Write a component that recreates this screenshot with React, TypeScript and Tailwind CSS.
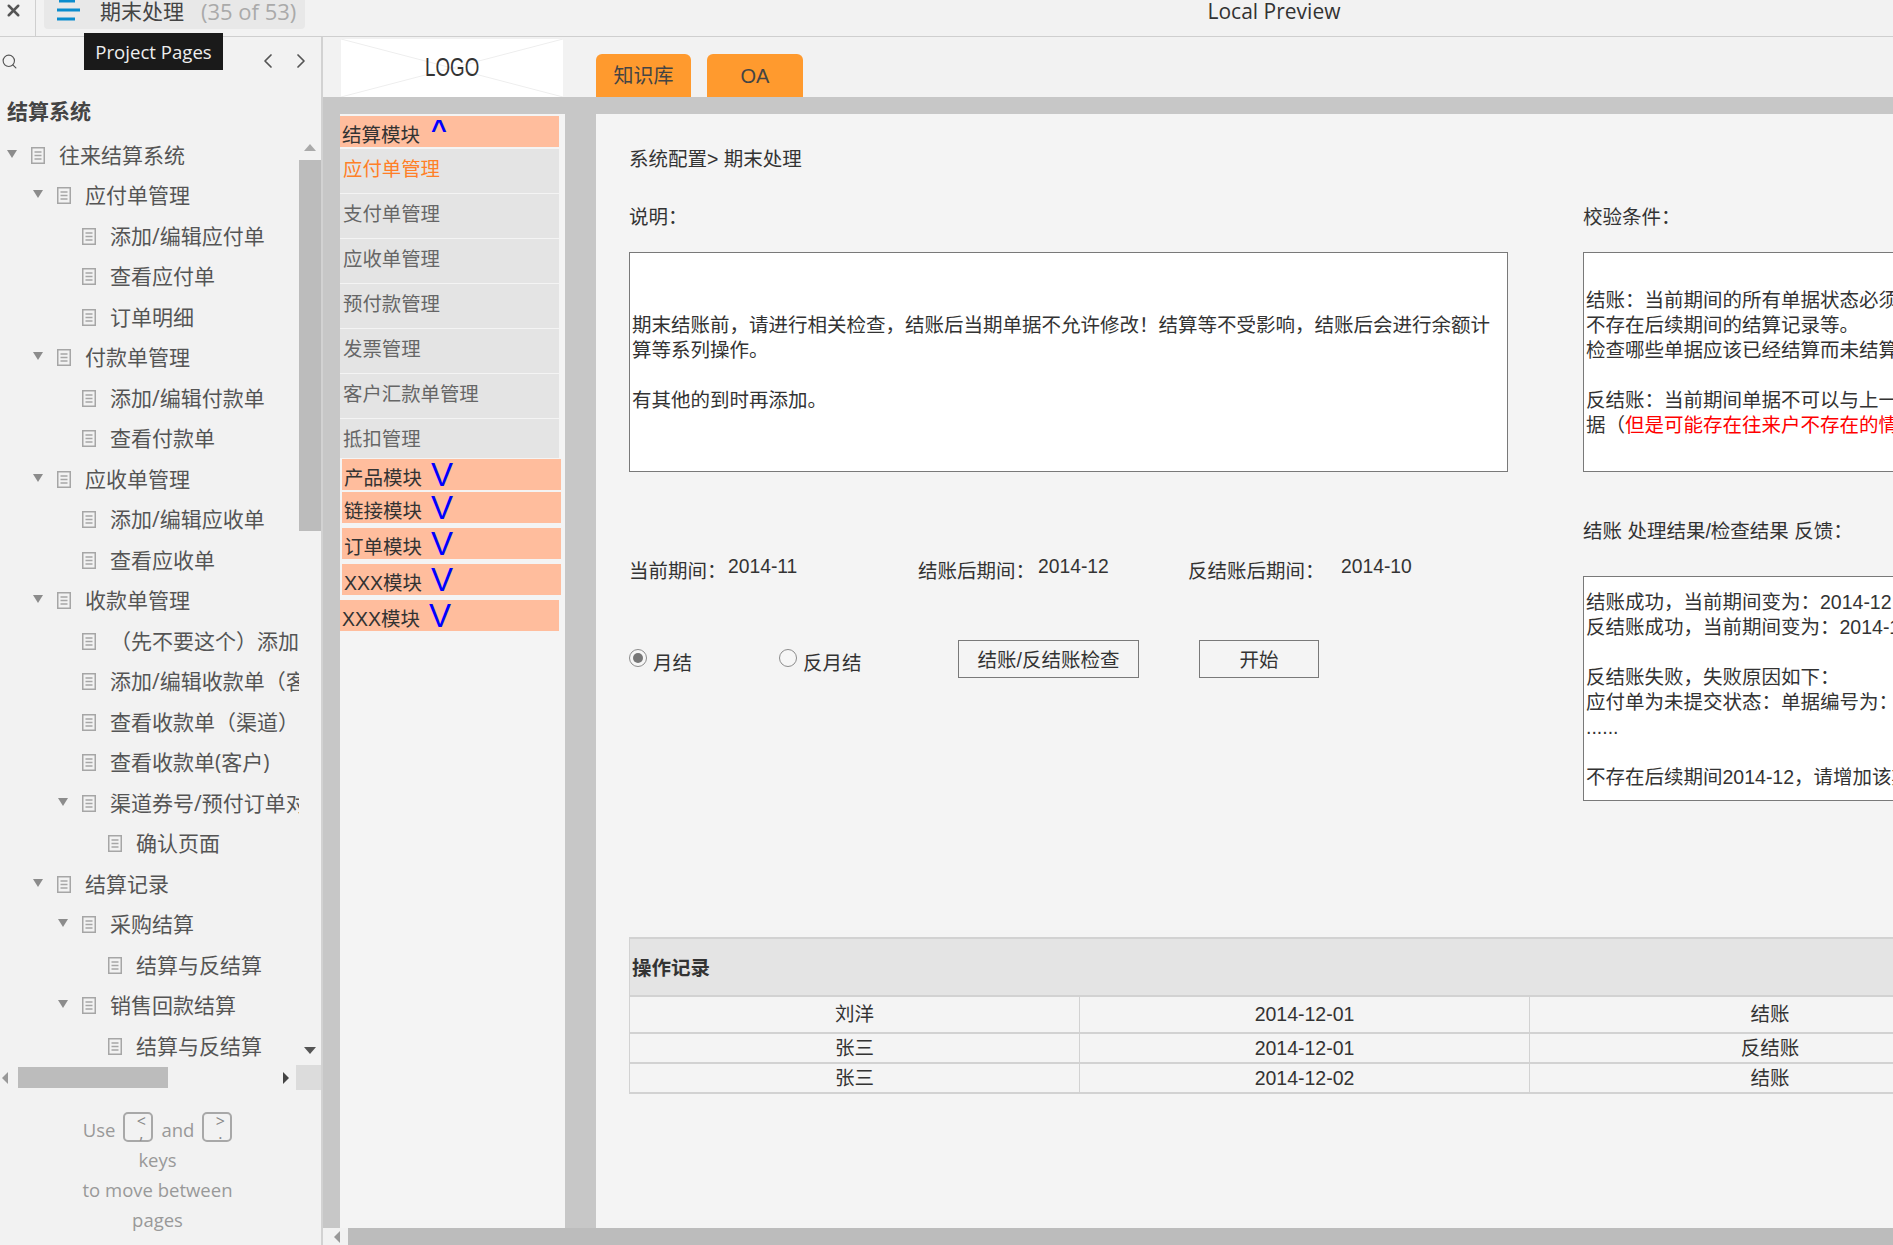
import { ChevronLeft, ChevronRight, Search, X } from 'lucide-react';

const levelPad = ['pl-[7px]', 'pl-[33px]', 'pl-[58px]', 'pl-[84px]'];

const tree = [
  { t: '往来结算系统', l: 0, o: true },
  { t: '应付单管理', l: 1, o: true },
  { t: '添加/编辑应付单', l: 2 },
  { t: '查看应付单', l: 2 },
  { t: '订单明细', l: 2 },
  { t: '付款单管理', l: 1, o: true },
  { t: '添加/编辑付款单', l: 2 },
  { t: '查看付款单', l: 2 },
  { t: '应收单管理', l: 1, o: true },
  { t: '添加/编辑应收单', l: 2 },
  { t: '查看应收单', l: 2 },
  { t: '收款单管理', l: 1, o: true },
  { t: '（先不要这个）添加/编辑收款单', l: 2 },
  { t: '添加/编辑收款单（客户）', l: 2 },
  { t: '查看收款单（渠道）', l: 2 },
  { t: '查看收款单(客户)', l: 2 },
  { t: '渠道券号/预付订单对应', l: 2, o: true },
  { t: '确认页面', l: 3 },
  { t: '结算记录', l: 1, o: true },
  { t: '采购结算', l: 2, o: true },
  { t: '结算与反结算', l: 3 },
  { t: '销售回款结算', l: 2, o: true },
  { t: '结算与反结算', l: 3 },
];

const navItems = ['支付单管理', '应收单管理', '预付款管理', '发票管理', '客户汇款单管理'];
const records = [
  ['刘洋', '2014-12-01', '结账', 'h-[37px]'],
  ['张三', '2014-12-01', '反结账', 'h-[30px]'],
  ['张三', '2014-12-02', '结账', 'h-[30px]'],
];

function PageIcon() {
  return (
    <svg width="14" height="17" viewBox="0 0 14 17" className="shrink-0">
      <rect x="0.75" y="0.75" width="12.5" height="15.5" fill="#f2f2f2" stroke="#a6a6a6" strokeWidth="1.5" />
      <path d="M3.5 5h7M3.5 8.5h7M3.5 12h7" stroke="#a6a6a6" strokeWidth="1.3" />
    </svg>
  );
}

function TreeRow({ t, l, o }: { t: string; l: number; o?: boolean }) {
  return (
    <div className={`flex h-[40.5px] items-center whitespace-nowrap ${levelPad[l]}`}>
      <span className="flex w-[24px] shrink-0 items-center">
        {o && <span className="mb-[3px] h-0 w-0 border-x-[5.5px] border-t-[8px] border-x-transparent border-t-[#8c8c8c]" />}
      </span>
      <PageIcon />
      <span className="ml-[14px] text-[21px] text-[#555]">{t}</span>
    </div>
  );
}

function KeyCap({ a, b }: { a: string; b: string }) {
  return (
    <span className="mb-[6px] flex h-[30px] w-[30px] flex-col rounded-[5px] border-2 border-[#a8a8a8] pl-[6px] text-[16px] leading-[12px] text-[#888]">
      <span className="mt-[1px]">{a}</span>
      <span>{b}</span>
    </span>
  );
}

function ModuleRow({ label, caret, shift }: { label: string; caret?: boolean; shift?: boolean }) {
  return (
    <div className={`flex h-[31px] w-[219px] bg-[#ffbd9d] pl-[2px] text-[19.5px] text-[#333] ${shift ? 'ml-[2px]' : ''}`}>
      <span className="mt-[4px] leading-[30px]">{label}</span>
      <span
        className={
          caret
            ? 'ml-[11px] mt-[-1px] text-[27px] font-bold leading-[30px] text-[#0000ff]'
            : 'ml-[9px] mt-[1px] text-[33px] leading-[30px] text-[#0000ff]'
        }
      >
        {caret ? '^' : 'V'}
      </span>
    </div>
  );
}

function NavItem({ label, active, short }: { label: string; active?: boolean; short?: boolean }) {
  return (
    <div
      className={`mb-px flex w-[219px] items-center bg-[#e4e4e4] pl-[3px] text-[19.4px] ${short ? 'h-[39px] pt-[3px]' : 'h-[44px] pb-[2px]'} ${active ? 'text-[#ff7f27]' : 'text-[#666]'}`}
    >
      {label}
    </div>
  );
}

function Radio({ on }: { on?: boolean }) {
  return (
    <span className="mt-[-2px] flex h-[18px] w-[18px] shrink-0 items-center justify-center rounded-full border border-[#8c8c8c] bg-[#f6f6f6]">
      {on && <span className="h-[10px] w-[10px] rounded-full bg-[#777]" />}
    </span>
  );
}

export default function App() {
  return (
    <div className="flex h-[1245px] w-[1893px] flex-col overflow-hidden bg-[#f2f2f2] font-['Liberation_Sans','Noto_Sans_CJK_SC',sans-serif] text-[#333]">
      <header className="relative flex h-[37px] shrink-0 border-b border-[#cfcfcf] font-['Open_Sans','Noto_Sans_CJK_SC',sans-serif]">
        <div className="flex w-[36px] shrink-0 items-start border-r border-[#cfcfcf] pl-[4px] pt-[1px]">
          <X size={19} strokeWidth={3.2} className="text-[#555]" />
        </div>
        <div className="ml-[8px] flex h-[29px] w-[261px] shrink-0 items-center rounded-b-[4px] bg-[#e8e8e8] pl-[12px]">
          <svg width="26" height="22" viewBox="0 0 26 22" className="mb-[9px]">
            <path d="M3 2h16M1 11h23M1 20h18" stroke="#0a8ccd" strokeWidth="3.2" />
          </svg>
          <span className="ml-[18px] mb-[6px] text-[21px] text-[#444]">期末处理</span>
          <span className="ml-[17px] mb-[6px] whitespace-nowrap text-[22px] text-[#aaa]">(35 of 53)</span>
        </div>
        <div className="flex-1 pl-[350px] text-center text-[21px] leading-[22px] text-[#333]">Local Preview</div>
        <div className="absolute left-[84px] top-[33px] z-10 flex h-[37px] w-[139px] items-center justify-center bg-[#1a1a1a] text-[18.6px] text-[#eee]">
          Project Pages
        </div>
      </header>

      <div className="flex min-h-0 flex-1">
        <aside className="flex w-[323px] shrink-0 flex-col border-r-2 border-r-[#d2d2d2] font-['Open_Sans','Noto_Sans_CJK_SC',sans-serif]">
          <div className="flex h-[48px] shrink-0 items-center text-[#555]">
            <Search size={17} strokeWidth={1.6} className="ml-[1px]" />
            <ChevronLeft size={24} strokeWidth={1.7} className="ml-[238px]" />
            <ChevronRight size={24} strokeWidth={1.7} className="ml-[9px]" />
          </div>
          <div className="flex h-[50px] shrink-0 items-center pl-[7px] pt-[4px] text-[21px] font-bold text-[#444]">结算系统</div>
          <div className="flex h-[930px] shrink-0">
            <div className="w-[299px] shrink-0 overflow-hidden">
              {tree.map((r, i) => (
                <TreeRow key={i} t={r.t} l={r.l} o={r.o} />
              ))}
            </div>
            <div className="flex w-[22px] shrink-0 flex-col items-center">
              <span className="mt-[9px] h-0 w-0 border-x-[6px] border-b-[7px] border-x-transparent border-b-[#aaa]" />
              <div className="mt-[9px] h-[371px] w-full bg-[#bcbcbc]" />
              <span className="mt-[516px] h-0 w-0 border-x-[6px] border-t-[7px] border-x-transparent border-t-[#555]" />
            </div>
          </div>
          <div className="flex h-[25px] shrink-0 items-center">
            <span className="ml-[2px] h-0 w-0 border-y-[6px] border-r-[6px] border-y-transparent border-r-[#999]" />
            <div className="ml-[10px] h-[21px] w-[150px] bg-[#bcbcbc]" />
            <span className="ml-[115px] h-0 w-0 border-y-[6px] border-l-[6px] border-y-transparent border-l-[#444]" />
            <div className="ml-[7px] h-full flex-1 bg-[#dcdcdc]" />
          </div>
          <div className="pr-[6px] pt-[24.5px] text-center text-[18.5px] text-[#999]">
            <div className="flex h-[30px] items-center justify-center gap-[8px] leading-[30px]">
              <span>Use</span>
              <KeyCap a="<" b="," />
              <span>and</span>
              <KeyCap a=">" b="." />
            </div>
            <div className="leading-[30px]">keys</div>
            <div className="leading-[30px]">to move between</div>
            <div className="leading-[30px]">pages</div>
          </div>
        </aside>

        <main className="flex min-w-0 flex-1 flex-col overflow-hidden">
          <div className="flex h-[60px] shrink-0">
            <div className="relative ml-[18px] mt-[2px] flex h-[58px] w-[222px] items-center justify-center bg-white">
              <svg viewBox="0 0 222 58" preserveAspectRatio="none" className="absolute inset-0 h-full w-full">
                <path d="M0 0L222 58M222 0L0 58" stroke="#eeeeee" strokeWidth="1" />
              </svg>
              <span className="relative scale-x-[0.75] text-[25px] text-[#333]">LOGO</span>
            </div>
            <button className="ml-[33px] mt-[17px] h-[43px] w-[95px] rounded-t-[6px] bg-[#ff9a2e] text-[20px] text-[#444]">知识库</button>
            <button className="ml-[16px] mt-[17px] h-[43px] w-[96px] rounded-t-[6px] bg-[#ff9a2e] text-[20px] text-[#444]">OA</button>
          </div>
          <div className="h-[17px] shrink-0 bg-[#c7c7c7]" />
          <div className="flex min-h-0 flex-1">
            <div className="w-[17px] shrink-0 bg-[#c7c7c7]" />
            <nav className="w-[225px] shrink-0 bg-[#f4f4f4] pt-[2px]">
              <div className="mb-[2px]">
                <ModuleRow label="结算模块" caret />
              </div>
              <NavItem label="应付单管理" active />
              {navItems.map((n) => (
                <NavItem key={n} label={n} />
              ))}
              <NavItem label="抵扣管理" short />
              <div className="flex flex-col">
                <div className="mb-[2px]"><ModuleRow label="产品模块" shift /></div>
                <div className="mb-[5px]"><ModuleRow label="链接模块" shift /></div>
                <div className="mb-[5px]"><ModuleRow label="订单模块" shift /></div>
                <div className="mb-[5px]"><ModuleRow label="XXX模块" shift /></div>
                <ModuleRow label="XXX模块" />
              </div>
            </nav>
            <div className="w-[31px] shrink-0 bg-[#c7c7c7]" />
            <section className="min-w-0 flex-1 overflow-hidden bg-[#f4f4f4] pl-[33px] text-[19.5px] leading-[25px]">
              <div className="mt-[32.5px]">系统配置&gt; 期末处理</div>
              <div className="flex">
                <div className="w-[879px] shrink-0">
                  <div className="mt-[33px]">说明：</div>
                  <div className="mt-[22.5px] h-[220px] border border-[#797979] bg-white px-[2px] pt-[60px]">
                    期末结账前，请进行相关检查，结账后当期单据不允许修改！结算等不受影响，结账后会进行余额计算等系列操作。
                    <br />
                    <br />
                    有其他的到时再添加。
                  </div>
                  <div className="mt-[83px] flex h-[25px] items-center">
                    <span className="mt-[8px] w-[99px]">当前期间：</span>
                    <span className="mb-[3px] w-[190px] text-[19.3px]">2014-11</span>
                    <span className="mt-[8px] w-[120px]">结账后期间：</span>
                    <span className="mb-[3px] w-[150px] text-[19.3px]">2014-12</span>
                    <span className="mt-[8px] w-[153px]">反结账后期间：</span>
                    <span className="mb-[3px] text-[19.3px]">2014-10</span>
                  </div>
                  <div className="mt-[60px] flex h-[38px] items-center">
                    <div className="flex w-[150px] items-center">
                      <Radio on />
                      <span className="ml-[6px] mt-[8px]">月结</span>
                    </div>
                    <div className="flex w-[179px] items-center">
                      <Radio />
                      <span className="ml-[6px] mt-[8px]">反月结</span>
                    </div>
                    <button className="h-[38px] w-[181px] border border-[#797979] pt-[2px]">结账/反结账检查</button>
                    <button className="ml-[60px] h-[38px] w-[120px] border border-[#797979] pt-[2px]">开始</button>
                  </div>
                </div>
                <div className="ml-[75px] w-[600px] shrink-0 whitespace-nowrap">
                  <div className="mt-[33px]">校验条件：</div>
                  <div className="mt-[22.5px] h-[220px] border border-[#797979] bg-white px-[2px] pt-[35px]">
                    结账：当前期间的所有单据状态必须为已提交，
                    <br />
                    不存在后续期间的结算记录等。
                    <br />
                    检查哪些单据应该已经结算而未结算的单据
                    <br />
                    <br />
                    反结账：当前期间单据不可以与上一期间的单
                    <br />
                    据（<span className="text-[#ff0000]">但是可能存在往来户不存在的情况</span>
                  </div>
                  <div className="mt-[46.5px]">结账 处理结果/检查结果 反馈：</div>
                  <div className="mt-[32.5px] h-[225px] border border-[#797979] bg-white px-[2px] pt-[13px]">
                    结账成功，当前期间变为：2014-12
                    <br />
                    反结账成功，当前期间变为：2014-10
                    <br />
                    <br />
                    反结账失败，失败原因如下：
                    <br />
                    应付单为未提交状态：单据编号为：
                    <br />
                    ......
                    <br />
                    <br />
                    不存在后续期间2014-12，请增加该期间
                  </div>
                </div>
              </div>
              <div className="mt-[136px] w-[1380px] text-center">
                <div className="flex h-[60px] items-center border-y-2 border-l border-[#d2d2d2] bg-[#e4e4e4] pl-[2px] pt-[2px] text-left font-bold">
                  操作记录
                </div>
                {records.map((r, i) => (
                  <div
                    key={i}
                    className={`grid grid-cols-[450px_450px_480px] items-center border-b-2 border-l border-[#d2d2d2] ${r[3]}`}
                  >
                    <span className="flex h-full items-center justify-center border-r border-[#d2d2d2]">{r[0]}</span>
                    <span className="flex h-full items-center justify-center border-r border-[#d2d2d2]">{r[1]}</span>
                    <span>{r[2]}</span>
                  </div>
                ))}
              </div>
            </section>
          </div>
          <div className="flex h-[17px] shrink-0 items-center">
            <span className="ml-[11px] h-0 w-0 border-y-[6px] border-r-[6px] border-y-transparent border-r-[#999]" />
            <div className="ml-[8px] h-full flex-1 bg-[#bcbcbc]" />
          </div>
        </main>
      </div>
    </div>
  );
}
